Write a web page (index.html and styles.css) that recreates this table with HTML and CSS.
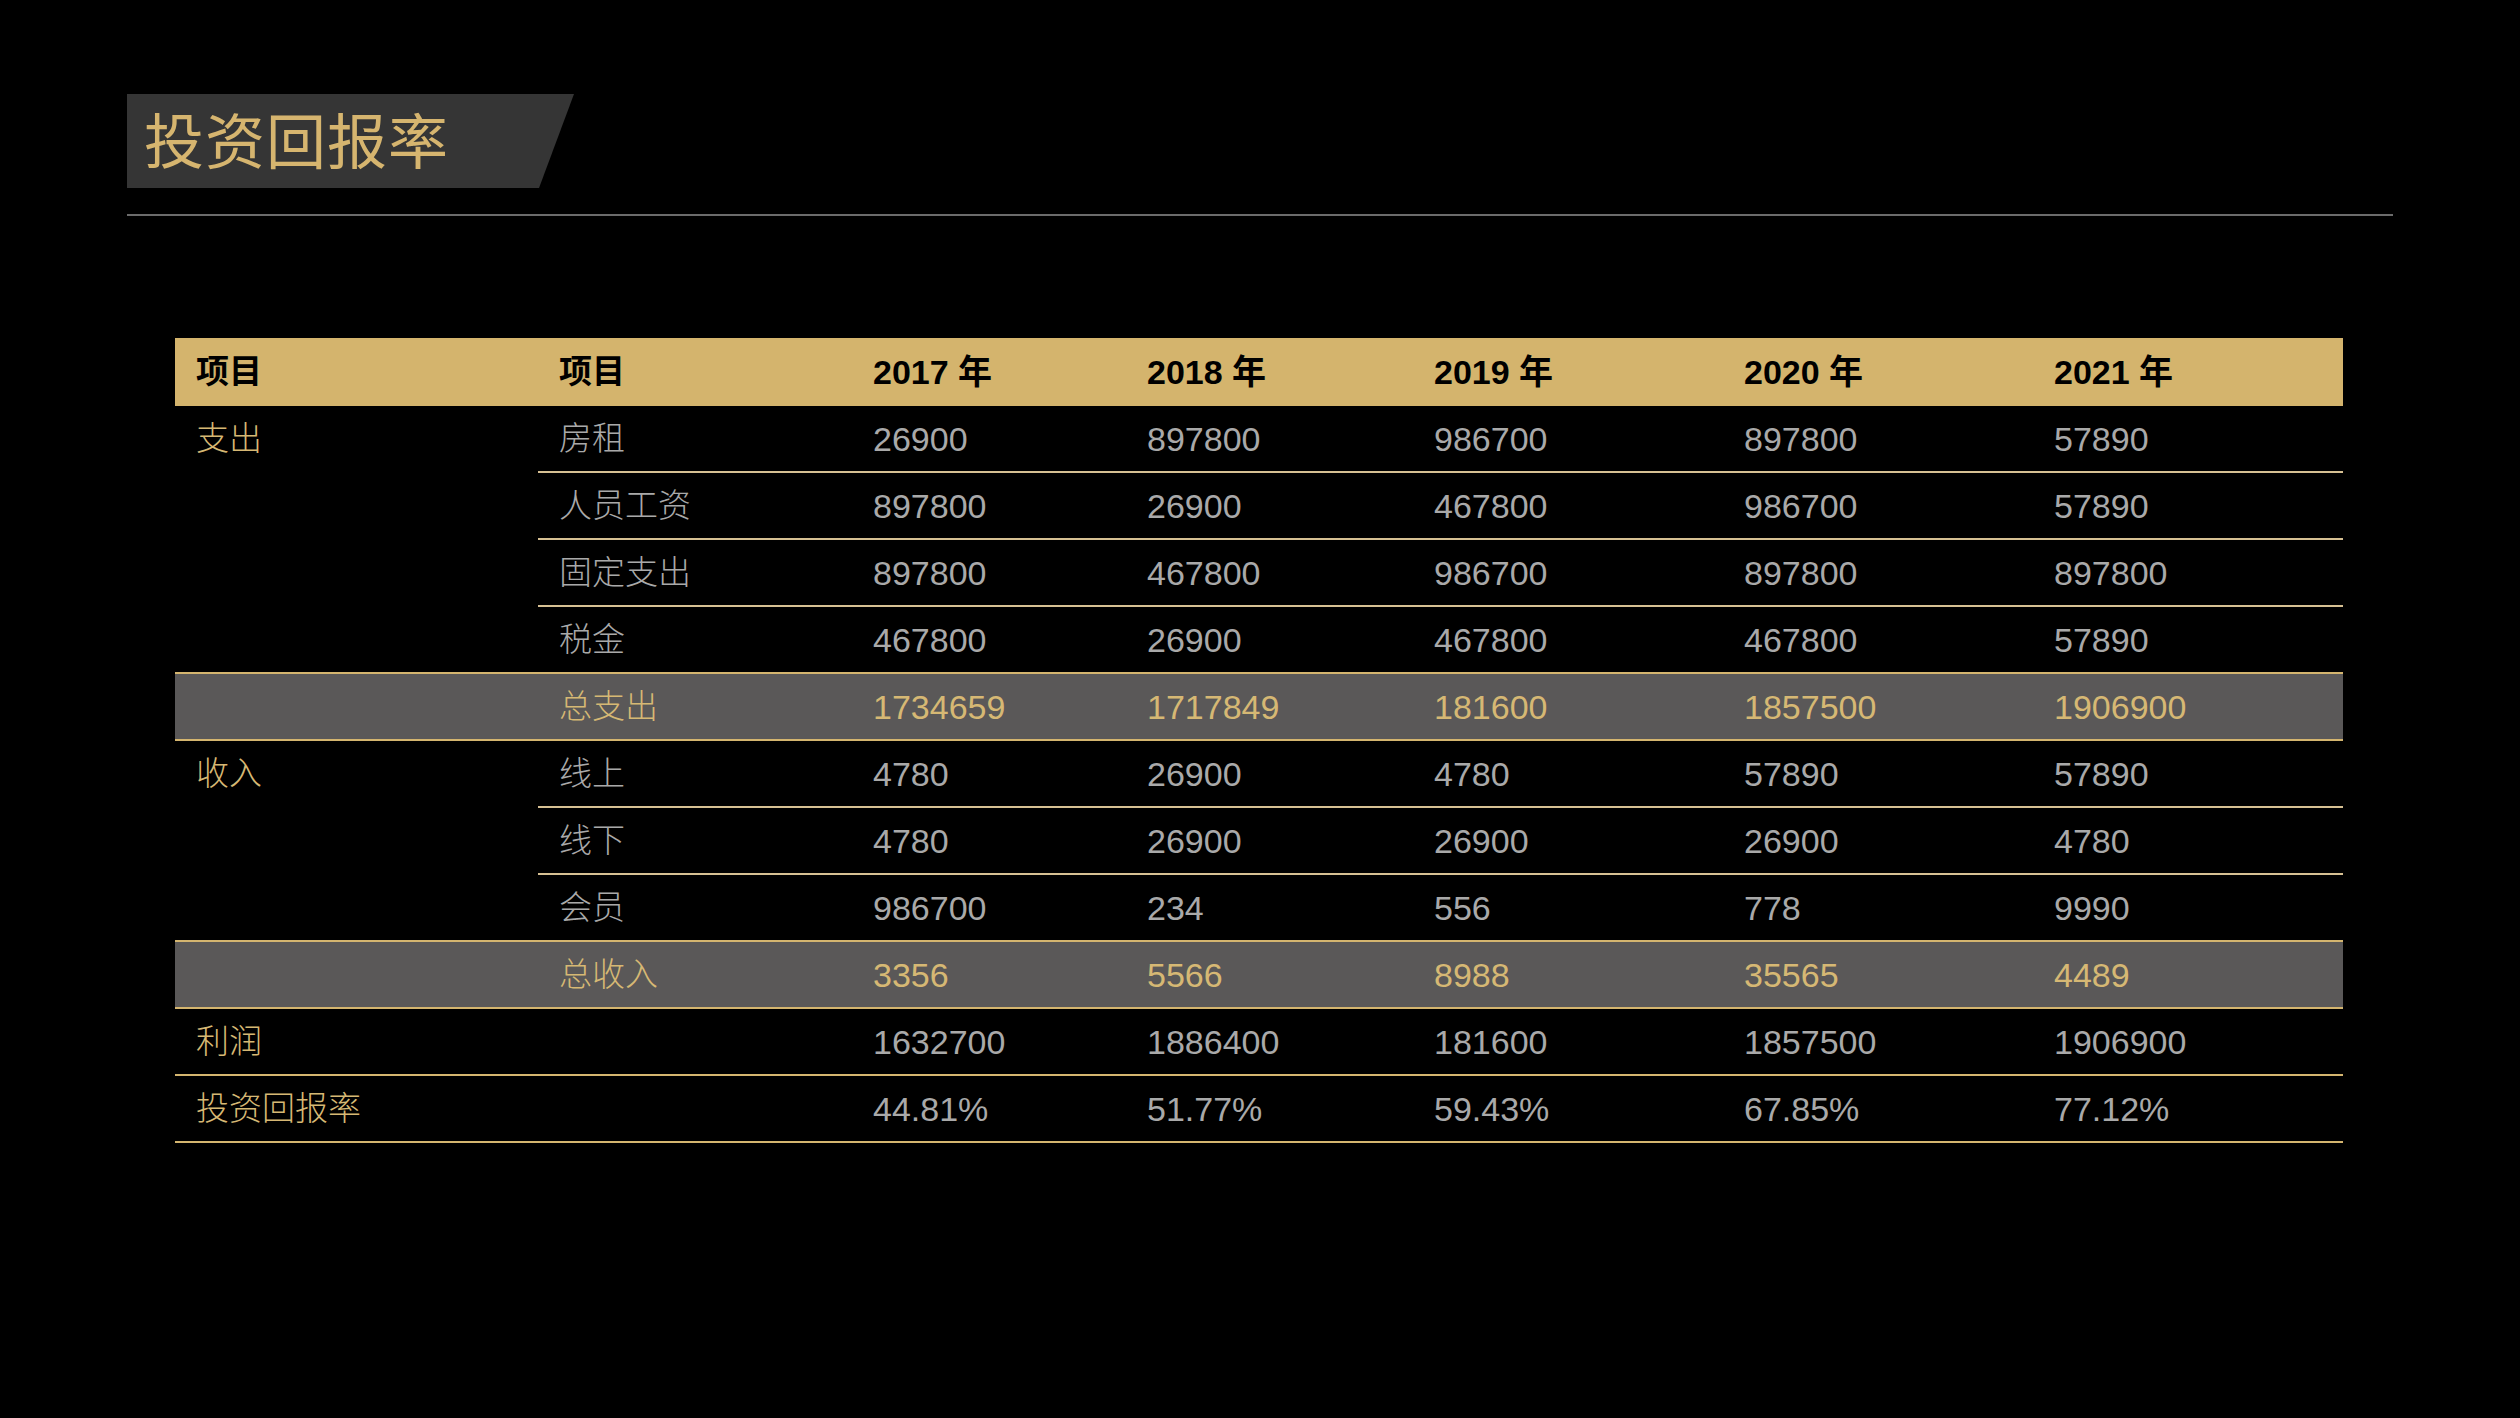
FILE: index.html
```html
<!DOCTYPE html>
<html lang="zh-CN">
<head>
<meta charset="utf-8">
<title>投资回报率</title>
<link rel="stylesheet" href="styles.css">
</head>
<body>
<div class="page">
  <div class="title-box"><h1 class="title">投资回报率</h1></div>
  <div class="rule"></div>

  <div class="table">
    <div class="row head">
      <div class="cell zh">项目</div>
      <div class="cell zh">项目</div>
      <div class="cell">2017 年</div>
      <div class="cell">2018 年</div>
      <div class="cell">2019 年</div>
      <div class="cell">2020 年</div>
      <div class="cell">2021 年</div>
    </div>

    <div class="group">
      <div class="cat zh">支出</div>
      <div class="subs">
        <div class="sub"><div class="cell zh">房租</div><div class="cell">26900</div><div class="cell">897800</div><div class="cell">986700</div><div class="cell">897800</div><div class="cell">57890</div></div>
        <div class="sub"><div class="cell zh">人员工资</div><div class="cell">897800</div><div class="cell">26900</div><div class="cell">467800</div><div class="cell">986700</div><div class="cell">57890</div></div>
        <div class="sub"><div class="cell zh">固定支出</div><div class="cell">897800</div><div class="cell">467800</div><div class="cell">986700</div><div class="cell">897800</div><div class="cell">897800</div></div>
        <div class="sub"><div class="cell zh">税金</div><div class="cell">467800</div><div class="cell">26900</div><div class="cell">467800</div><div class="cell">467800</div><div class="cell">57890</div></div>
      </div>
    </div>

    <div class="row total">
      <div class="cell"></div>
      <div class="cell zh">总支出</div>
      <div class="cell">1734659</div>
      <div class="cell">1717849</div>
      <div class="cell">181600</div>
      <div class="cell">1857500</div>
      <div class="cell">1906900</div>
    </div>

    <div class="group">
      <div class="cat zh">收入</div>
      <div class="subs">
        <div class="sub"><div class="cell zh">线上</div><div class="cell">4780</div><div class="cell">26900</div><div class="cell">4780</div><div class="cell">57890</div><div class="cell">57890</div></div>
        <div class="sub"><div class="cell zh">线下</div><div class="cell">4780</div><div class="cell">26900</div><div class="cell">26900</div><div class="cell">26900</div><div class="cell">4780</div></div>
        <div class="sub"><div class="cell zh">会员</div><div class="cell">986700</div><div class="cell">234</div><div class="cell">556</div><div class="cell">778</div><div class="cell">9990</div></div>
      </div>
    </div>

    <div class="row total">
      <div class="cell"></div>
      <div class="cell zh">总收入</div>
      <div class="cell">3356</div>
      <div class="cell">5566</div>
      <div class="cell">8988</div>
      <div class="cell">35565</div>
      <div class="cell">4489</div>
    </div>

    <div class="row plain">
      <div class="cell zh gold">利润</div>
      <div class="cell"></div>
      <div class="cell">1632700</div>
      <div class="cell">1886400</div>
      <div class="cell">181600</div>
      <div class="cell">1857500</div>
      <div class="cell">1906900</div>
    </div>

    <div class="row plain">
      <div class="cell zh gold">投资回报率</div>
      <div class="cell"></div>
      <div class="cell">44.81%</div>
      <div class="cell">51.77%</div>
      <div class="cell">59.43%</div>
      <div class="cell">67.85%</div>
      <div class="cell">77.12%</div>
    </div>
  </div>
</div>
</body>
</html>
```

FILE: styles.css
```css
* { box-sizing: border-box; }

html, body {
  margin: 0;
  padding: 0;
  background: #000;
}

body {
  width: 2520px;
  height: 1418px;
  overflow: hidden;
  font-family: "Liberation Sans", "Noto Sans CJK SC", sans-serif;
}

.page {
  padding: 94px 127px 0 127px;
}

.title-box {
  width: 447px;
  height: 94px;
  background: #353535;
  clip-path: polygon(0 0, 100% 0, 412px 100%, 0 100%);
  display: flex;
  align-items: center;
  padding-left: 17px;
}

.title {
  margin: 0;
  font-family: "Noto Sans CJK SC", sans-serif;
  font-weight: 400;
  font-size: 60px;
  letter-spacing: 1px;
  line-height: 1;
  color: #d6b56f;
  position: relative;
  top: -3px;
}

.rule {
  margin-top: 26px;
  height: 2px;
  background: #6b6b6b;
}

.table {
  margin: 122px 0 0 48px;
  width: 2168px;
  font-size: 34px;
  line-height: 40px;
  font-weight: 300;
  color: #a9a9a9;
}

.row {
  display: grid;
  grid-template-columns: 363px 314px 274px 287px 310px 310px 310px;
  height: 67px;
  border-bottom: 2px solid #d4b56f;
}

.cell {
  display: flex;
  align-items: center;
  padding-left: 21px;
  white-space: nowrap;
}

.zh {
  font-size: 33px;
}

.head {
  height: 68px;
  background: #d4b46d;
  border-bottom: none;
  color: #000;
  font-weight: 700;
}

.group {
  display: flex;
  border-bottom: 2px solid #d4b56f;
}

.cat {
  width: 363px;
  flex: none;
  height: 65px;
  display: flex;
  align-items: center;
  padding-left: 21px;
  color: #d6b874;
}

.subs {
  flex: 1;
  display: flex;
  flex-direction: column;
}

.sub {
  display: grid;
  grid-template-columns: 314px 274px 287px 310px 310px 310px;
  height: 67px;
  border-bottom: 2px solid #d6c093;
}

.sub:last-child {
  height: 65px;
  border-bottom: none;
}

.total {
  background: #5a5858;
  color: #d6b874;
}

.gold {
  color: #d6b874;
}
```
